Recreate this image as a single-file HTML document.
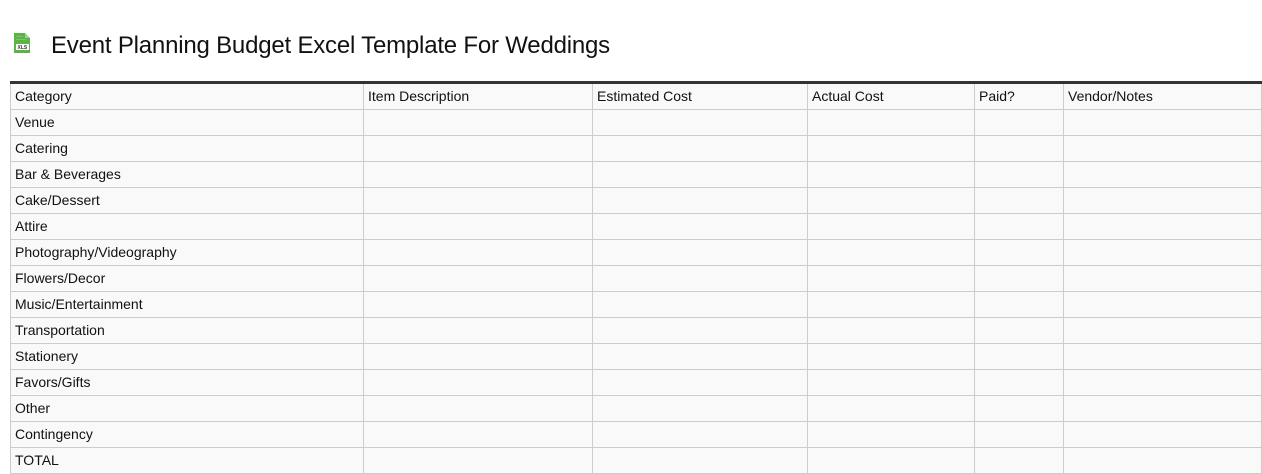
<!DOCTYPE html>
<html><head><style>
body{margin:0;background:#fff;font-family:"Liberation Sans",Arial,sans-serif;width:1262px;height:474px;overflow:hidden;position:relative}
h1{position:absolute;left:51px;top:30px;margin:0;font-weight:normal;font-size:24px;letter-spacing:-0.2px;color:#111;line-height:32px}
.ic{position:absolute;left:12px;top:32px}
table{position:absolute;left:10px;top:81px;width:1252px;border-collapse:collapse;border-top:3px solid #333;table-layout:fixed;background:#f9f9f9}
td{border:1px solid #ccc;height:24px;padding:0 0 1px 4px;font-size:14px;color:#111;vertical-align:middle;white-space:nowrap}
</style></head><body>
<svg class="ic" width="20" height="22" viewBox="0 0 20 22"><path d="M2 1h11l5 5v15H2z" fill="#5cb34a"/><path d="M13 1v5h5z" fill="#9ad88a"/><rect x="4" y="4" width="7" height="1" fill="#7cc46a"/><rect x="4" y="7" width="10" height="1" fill="#7cc46a"/><rect x="4" y="12" width="13" height="6" fill="#fff"/><text x="5.5" y="17" font-size="5" font-family="Liberation Sans" font-weight="bold" fill="#333">XLS</text></svg>
<h1>Event Planning Budget Excel Template For Weddings</h1>
<table>
<colgroup><col style="width:353px"><col style="width:229px"><col style="width:215px"><col style="width:167px"><col style="width:89px"><col></colgroup>
<tr><td>Category</td><td>Item Description</td><td>Estimated Cost</td><td>Actual Cost</td><td>Paid?</td><td>Vendor/Notes</td></tr>
<tr><td>Venue</td><td></td><td></td><td></td><td></td><td></td></tr>
<tr><td>Catering</td><td></td><td></td><td></td><td></td><td></td></tr>
<tr><td>Bar &amp; Beverages</td><td></td><td></td><td></td><td></td><td></td></tr>
<tr><td>Cake/Dessert</td><td></td><td></td><td></td><td></td><td></td></tr>
<tr><td>Attire</td><td></td><td></td><td></td><td></td><td></td></tr>
<tr><td>Photography/Videography</td><td></td><td></td><td></td><td></td><td></td></tr>
<tr><td>Flowers/Decor</td><td></td><td></td><td></td><td></td><td></td></tr>
<tr><td>Music/Entertainment</td><td></td><td></td><td></td><td></td><td></td></tr>
<tr><td>Transportation</td><td></td><td></td><td></td><td></td><td></td></tr>
<tr><td>Stationery</td><td></td><td></td><td></td><td></td><td></td></tr>
<tr><td>Favors/Gifts</td><td></td><td></td><td></td><td></td><td></td></tr>
<tr><td>Other</td><td></td><td></td><td></td><td></td><td></td></tr>
<tr><td>Contingency</td><td></td><td></td><td></td><td></td><td></td></tr>
<tr><td>TOTAL</td><td></td><td></td><td></td><td></td><td></td></tr>
</table>
</body></html>
